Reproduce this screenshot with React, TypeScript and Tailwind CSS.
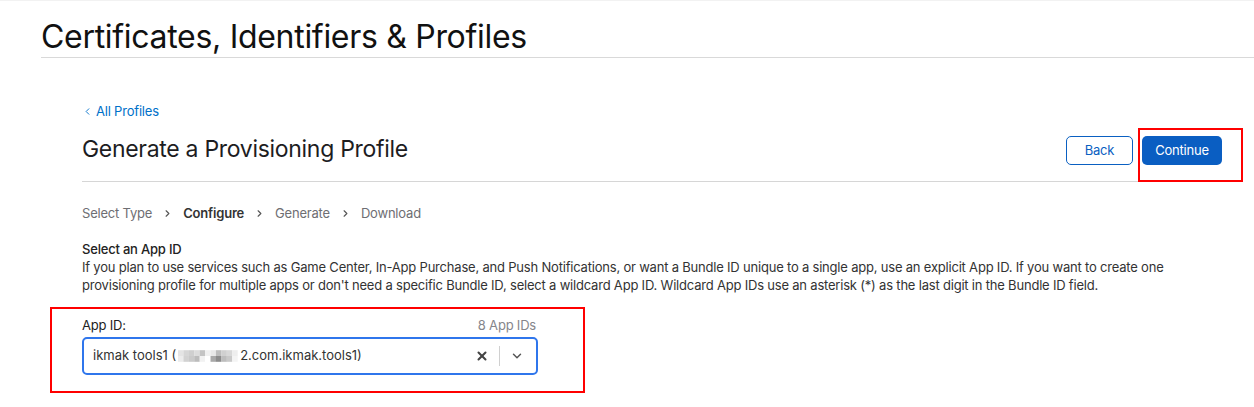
import { X, ChevronDown, ChevronRight, ChevronLeft } from 'lucide-react'

const mosaic = [
  ['#e4e4e4', '#d6d6d6', '#cfcfcf', '#dcdcdc', '#c4c4c4', '#f0f0f0', '#e8e8e8', '#bdbdbd', '#d0d0d0', '#d8d8d8', '#eeeeee'],
  ['#ececec', '#d2d2d2', '#cacaca', '#bcbcbc', '#f2f2f2', '#ffffff', '#a9a9a9', '#8c8c8c', '#bdbdbd', '#c9c9c9', '#f4f4f4'],
]

function Mosaic() {
  return (
    <svg width="60" height="12" viewBox="0 0 62 12" className="mx-[2px]">
      {mosaic.map((row, r) =>
        row.map((c, i) => <rect key={`${r}-${i}`} x={i * 5.6} y={r * 6} width="5.7" height="6" fill={c} />)
      )}
    </svg>
  )
}

function Steps() {
  const steps = ['Select Type', 'Configure', 'Generate', 'Download']
  return (
    <div className="flex items-center text-[13px] text-[#6e6e73]">
      {steps.map((s, i) => (
        <div key={s} className="flex items-center">
          {i > 0 && <ChevronRight className="mx-[10px] h-[11px] w-[11px] text-[#555]" strokeWidth={2.5} />}
          <span className={i === 1 ? 'font-semibold text-[#333]' : ''}>{s}</span>
        </div>
      ))}
    </div>
  )
}

export default function App() {
  return (
    <div
      className="relative min-h-[407px] border-t border-[#f2f2f2] bg-white text-[#1d1d1f]"
      style={{ fontFamily: 'Inter, "Noto Sans", sans-serif' }}
    >
      <header className="ml-[41px] border-b border-[#d9d9d9] pt-[17px] pb-[2px]">
        <h1 className="text-[32px] leading-[37px] tracking-[-0.3px] text-[#111]">Certificates, Identifiers &amp; Profiles</h1>
      </header>

      <main className="mx-[82px] w-[1140px] pt-[44px] tracking-[-0.2px]">
        <a className="flex items-center gap-[3px] text-[13px] leading-[18px] text-[#0070c9]">
          <ChevronLeft className="h-[11px] w-[11px]" strokeWidth={2} />
          All Profiles
        </a>

        <div className="mt-[13px] flex items-end justify-between border-b border-[#d6d6d6] pb-[16px]">
          <h2 className="text-[23px] leading-[32px] tracking-[-0.3px] text-[#1d1d1f]">Generate a Provisioning Profile</h2>
          <div className="flex gap-[9px]">
            <button className="h-[29px] w-[67px] rounded-[5px] border border-[#0a60c2] bg-white text-[13px] text-[#0a60c2]">
              Back
            </button>
            <button className="h-[29px] w-[80px] rounded-[5px] bg-[#0a5ec2] text-[13px] text-white">Continue</button>
          </div>
        </div>

        <div className="pt-[22px]">
          <Steps />
        </div>

        <section className="mt-[16px] text-[13px] leading-[18px] text-[#333]">
          <h3 className="font-medium text-[#222]">Select an App ID</h3>
          <p>
            If you plan to use services such as Game Center, In-App Purchase, and Push Notifications, or want a Bundle ID
            unique to a single app, use an explicit App ID. If you want to create one provisioning profile for multiple
            apps or don't need a specific Bundle ID, select a wildcard App ID. Wildcard App IDs use an asterisk (*) as the
            last digit in the Bundle ID field.
          </p>
        </section>

        <div className="mt-[22px] w-[456px] text-[13px]">
          <div className="flex items-end justify-between leading-[18px]">
            <span className="text-[#222]">App ID:</span>
            <span className="pr-[2px] text-[#86868b]">8 App IDs</span>
          </div>
          <div className="mt-[3px] flex h-[38px] items-center rounded-[5px] border-2 border-[#2f76ec] pl-[9px] pr-[8px]">
            <div className="flex flex-1 items-center tracking-normal text-[#333]">
              <span>ikmak tools1 (</span>
              <Mosaic />
              <span>2.com.ikmak.tools1)</span>
            </div>
            <X className="h-[14px] w-[14px] text-[#444]" strokeWidth={3.5} />
            <div className="mx-[10px] h-[20px] w-px bg-[#d0d0d0]" />
            <ChevronDown className="mr-[4px] h-[14px] w-[14px] text-[#555]" strokeWidth={2.5} />
          </div>
        </div>
      </main>

      {/* annotation boxes */}
      <div className="absolute left-[1138px] top-[127px] h-[54px] w-[105px] border-2 border-[#ff0000]" />
      <div className="absolute left-[50px] top-[306px] h-[86px] w-[535px] border-2 border-[#ff0000]" />
    </div>
  )
}
